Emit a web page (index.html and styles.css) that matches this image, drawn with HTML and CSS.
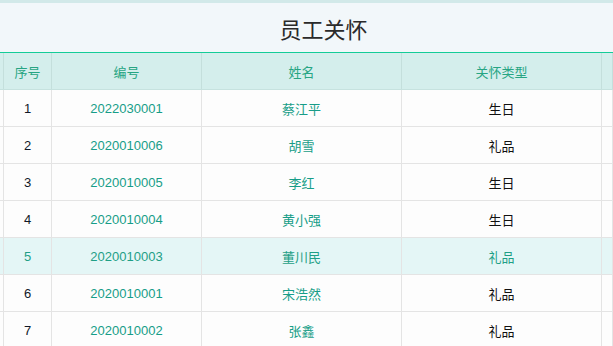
FILE: index.html
```html
<!DOCTYPE html>
<html lang="zh">
<head>
<meta charset="utf-8">
<link rel="stylesheet" href="styles.css">
</head>
<body>
<div class="page">
  <div class="title">员工关怀</div>
  <div class="grid head">
    <div class="c"></div><div class="c">序号</div><div class="c">编号</div><div class="c">姓名</div><div class="c">关怀类型</div><div class="c"></div>
  </div>
  <div class="grid row"><div class="c"></div><div class="c idx">1</div><div class="c g">2022030001</div><div class="c g">蔡江平</div><div class="c">生日</div><div class="c"></div></div>
  <div class="grid row"><div class="c"></div><div class="c idx">2</div><div class="c g">2020010006</div><div class="c g">胡雪</div><div class="c">礼品</div><div class="c"></div></div>
  <div class="grid row"><div class="c"></div><div class="c idx">3</div><div class="c g">2020010005</div><div class="c g">李红</div><div class="c">生日</div><div class="c"></div></div>
  <div class="grid row"><div class="c"></div><div class="c idx">4</div><div class="c g">2020010004</div><div class="c g">黄小强</div><div class="c">生日</div><div class="c"></div></div>
  <div class="grid row hover"><div class="c"></div><div class="c idx">5</div><div class="c g">2020010003</div><div class="c g">董川民</div><div class="c">礼品</div><div class="c"></div></div>
  <div class="grid row"><div class="c"></div><div class="c idx">6</div><div class="c g">2020010001</div><div class="c g">宋浩然</div><div class="c">礼品</div><div class="c"></div></div>
  <div class="grid row"><div class="c"></div><div class="c idx">7</div><div class="c g">2020010002</div><div class="c g">张鑫</div><div class="c">礼品</div><div class="c"></div></div>
</div>
</body>
</html>
```
FILE: styles.css
```css
* { box-sizing: border-box; }
html, body { margin: 0; padding: 0; }
body {
  background: #fdfdfd;
  font-family: "Liberation Sans", "Noto Sans CJK SC", sans-serif;
  font-size: 13px;
  color: #111;
  width: 613px;
  height: 346px;
  overflow: hidden;
}
.page {
  border-top: 3px solid #d2e9e9;
}
.title {
  height: 50px;
  background: #f2f7fa;
  border-bottom: 1px solid #14cc98;
  display: flex;
  align-items: center;
  justify-content: center;
  padding-left: 34px;
  font-size: 22px;
  color: #2a2a2a;
}
.grid {
  display: grid;
  grid-template-columns: 4px 48px 150px 200px 200px 1fr;
}
.c {
  display: flex;
  align-items: center;
  justify-content: center;
  border-right: 1px solid #e4e4e4;
  white-space: nowrap;
}
.head {
  height: 37px;
  background: #d4eeec;
  border-bottom: 1px solid #c6e2df;
  color: #27a583;
}
.head .c { border-right-color: #c4dfdc; }
.row {
  height: 37px;
  border-bottom: 1px solid #e4e4e4;
}
.idx { color: #101828; }
.g { color: #179d88; }
.hover { background: #e4f6f6; }
.hover .c { color: #1f9f86; }
```
